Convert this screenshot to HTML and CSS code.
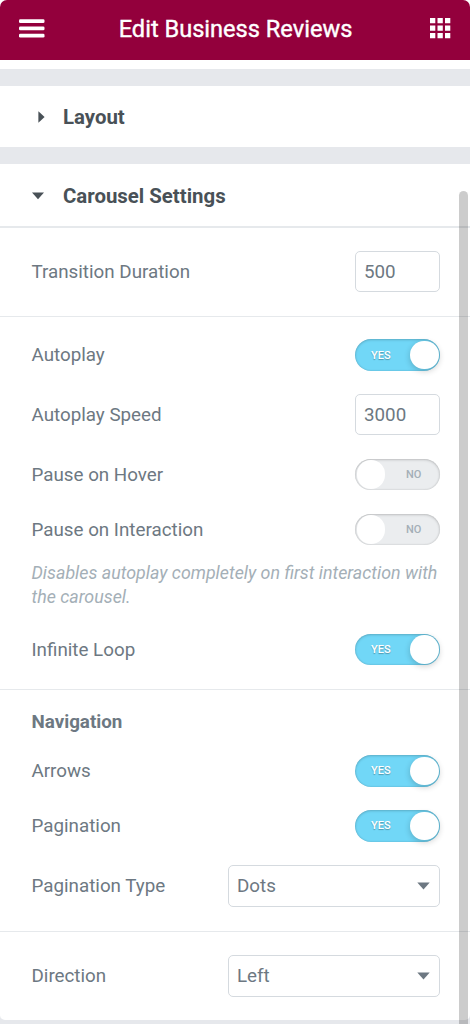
FILE: index.html
```html
<!DOCTYPE html>
<html lang="en">
<head>
  <meta charset="UTF-8">
  <title>Edit Business Reviews</title>
  <meta name="viewport" content="width=device-width, initial-scale=1.0">
  <link rel="stylesheet" href="styles.css">
</head>
<body>
  <div class="panel">
    <header class="panel-header">
      <svg class="menu-icon" width="26" height="19" viewBox="0 0 26 19" fill="#fff">
        <rect x="0" y="0.2" width="25.5" height="3.8" rx="1.3"/>
        <rect x="0" y="7.4" width="25.5" height="3.8" rx="1.3"/>
        <rect x="0" y="14.7" width="25.5" height="3.8" rx="1.3"/>
      </svg>
      <h1>Edit Business Reviews</h1>
      <svg class="apps-icon" width="21" height="21" viewBox="0 0 21 21" fill="#fff">
        <path d="M0 0h5.3v5.3H0zM7.5 0h5.3v5.3H7.5zM15 0h5.3v5.3H15zM0 7.5h5.3v5.3H0zM7.5 7.5h5.3v5.3H7.5zM15 7.5h5.3v5.3H15zM0 15h5.3v5.3H0zM7.5 15h5.3v5.3H7.5zM15 15h5.3v5.3H15z"/>
      </svg>
    </header>
    <div class="panel-strip"></div>

    <!-- Layout (collapsed) -->
    <section class="section">
      <div class="section-title">
        <svg class="arrow-right" width="7" height="12" viewBox="0 0 7 12"><path d="M0.4 0.3L6.6 6L0.4 11.7z" fill="#495157"/></svg>
        <h2>Layout</h2>
      </div>
    </section>

    <!-- Carousel Settings (open) -->
    <section class="section section-open">
      <div class="section-title">
        <svg class="arrow-down" width="12" height="8" viewBox="0 0 12 8"><path d="M0 0.5h12L6 7.3z" fill="#495157"/></svg>
        <h2>Carousel Settings</h2>
      </div>

      <div class="group group-duration">
        <div class="control">
          <label for="duration">Transition Duration</label>
          <input id="duration" class="number" type="text" value="500">
        </div>
      </div>

      <div class="group group-autoplay">
        <div class="control">
          <span>Autoplay</span>
          <div class="switch switch-on"><span>YES</span></div>
        </div>
        <div class="control">
          <label for="speed">Autoplay Speed</label>
          <input id="speed" class="number" type="text" value="3000">
        </div>
        <div class="control">
          <span>Pause on Hover</span>
          <div class="switch"><span>NO</span></div>
        </div>
        <div class="control">
          <span>Pause on Interaction</span>
          <div class="switch"><span>NO</span></div>
        </div>
        <p class="description">Disables autoplay completely on first interaction with the carousel.</p>
        <div class="control">
          <span>Infinite Loop</span>
          <div class="switch switch-on"><span>YES</span></div>
        </div>
      </div>

      <div class="group group-navigation">
        <h3>Navigation</h3>
        <div class="control">
          <span>Arrows</span>
          <div class="switch switch-on"><span>YES</span></div>
        </div>
        <div class="control">
          <span>Pagination</span>
          <div class="switch switch-on"><span>YES</span></div>
        </div>
        <div class="control">
          <span>Pagination Type</span>
          <div class="select">Dots
            <svg width="13" height="8" viewBox="0 0 13 8"><path d="M0.3 0.5h12.4L6.5 7.4z" fill="#6d7882"/></svg>
          </div>
        </div>
      </div>

      <div class="group group-direction">
        <div class="control">
          <span>Direction</span>
          <div class="select">Left
            <svg width="13" height="8" viewBox="0 0 13 8"><path d="M0.3 0.5h12.4L6.5 7.4z" fill="#6d7882"/></svg>
          </div>
        </div>
      </div>
    </section>
    <div class="scrollbar"></div>
  </div>
</body>
</html>
```

FILE: styles.css
```css
* { box-sizing: border-box; }
body {
  margin: 0;
  background: #fff;
  font-family: Roboto, sans-serif;
  font-size: 18.8px;
  color: #6d7882;
}
h1, h2, h3, p { margin: 0; }
.panel {
  position: relative;
  width: 470px;
  height: 1024px;
  overflow: hidden;
  background: #e6e8ec;
}
.panel-header {
  display: flex;
  align-items: center;
  justify-content: space-between;
  height: 60.4px;
  padding: 0 19px 3px;
  background: #93003c;
  border-radius: 7px 7px 0 0;
  color: #fff;
  box-shadow: 0 -8px 0 8px #fff;
}
.panel-header h1 {
  margin-right: 4px;
  font-size: 23.6px;
  font-weight: 400;
  line-height: 28px;
  -webkit-text-stroke: 0.4px #fff;
}
.panel-header svg { flex: none; }
.panel-strip {
  height: 8.6px;
  background: #fff;
}
.section {
  margin-top: 17px;
  background: #fff;
}
.section-title {
  display: flex;
  align-items: center;
  height: 61.5px;
  padding-left: 31px;
}
.section-title svg { flex: none; }
.section-title h2 {
  font-size: 20.4px;
  font-weight: 700;
  color: #495157;
}
.arrow-right { margin: 0 18px 0 7px; }
.arrow-down { margin: 0 19px 0 1px; }
.section-open {
  height: 856px;
  border-radius: 0 0 5px 5px;
}
.section-open .section-title { padding-top: 1px; }

/* control groups */
.group {
  border-top: 1px solid #e6e9ec;
  padding: 23px 30px 24px 31.5px;
}
.group-duration {
  padding-top: 23.4px;
  border-top-width: 2px;
}
.group-autoplay { padding-top: 22px; }
.group-navigation { padding-top: 20px; }
.group-direction { padding-top: 22.4px; }
.control {
  display: flex;
  align-items: center;
  justify-content: space-between;
}
.control + .control { margin-top: 23.6px; }
.group h3 {
  font-size: 18.8px;
  font-weight: 700;
  line-height: 24px;
  margin-bottom: 21px;
}
.number {
  width: 85px;
  height: 41px;
  padding: 0 8px;
  border: 1.5px solid #d5dadf;
  border-radius: 5px;
  background: #fff;
  font: inherit;
  color: inherit;
}
.select {
  display: flex;
  align-items: center;
  justify-content: space-between;
  width: 212px;
  height: 42px;
  padding: 0 9px 0 8px;
  border: 1.5px solid #d5dadf;
  border-radius: 5px;
}
.description {
  margin: 15.4px 0 24.3px;
  font-size: 17.84px;
  font-style: italic;
  line-height: 24.4px;
  color: #a4afb7;
}

/* switches */
.switch {
  display: flex;
  align-items: center;
  position: relative;
  width: 85px;
  height: 31.4px;
  padding-left: 51px;
  border-radius: 16px;
  background: #ebedef;
  box-shadow: inset 0 1px 3px rgba(0,0,0,0.16), inset 0 0 2px rgba(0,0,0,0.16);
  font-size: 11px;
  font-weight: 500;
  color: #a4afb7;
}
.switch::after {
  content: "";
  position: absolute;
  top: 1.5px;
  left: 1.5px;
  width: 28.5px;
  height: 28.5px;
  border-radius: 50%;
  background: #fff;
}
.switch-on {
  padding-left: 16px;
  background: #71d7f7;
  color: #fff;
  text-shadow: 0 1px 1px rgba(0,0,0,0.3);
}
.switch-on::after {
  left: 55px;
  box-shadow: 0 2px 6px rgba(0,0,0,0.2);
}
.scrollbar {
  position: absolute;
  top: 191px;
  right: 2px;
  width: 9px;
  height: 850px;
  border-radius: 5px;
  background: rgba(0,0,0,0.2);
}
```
